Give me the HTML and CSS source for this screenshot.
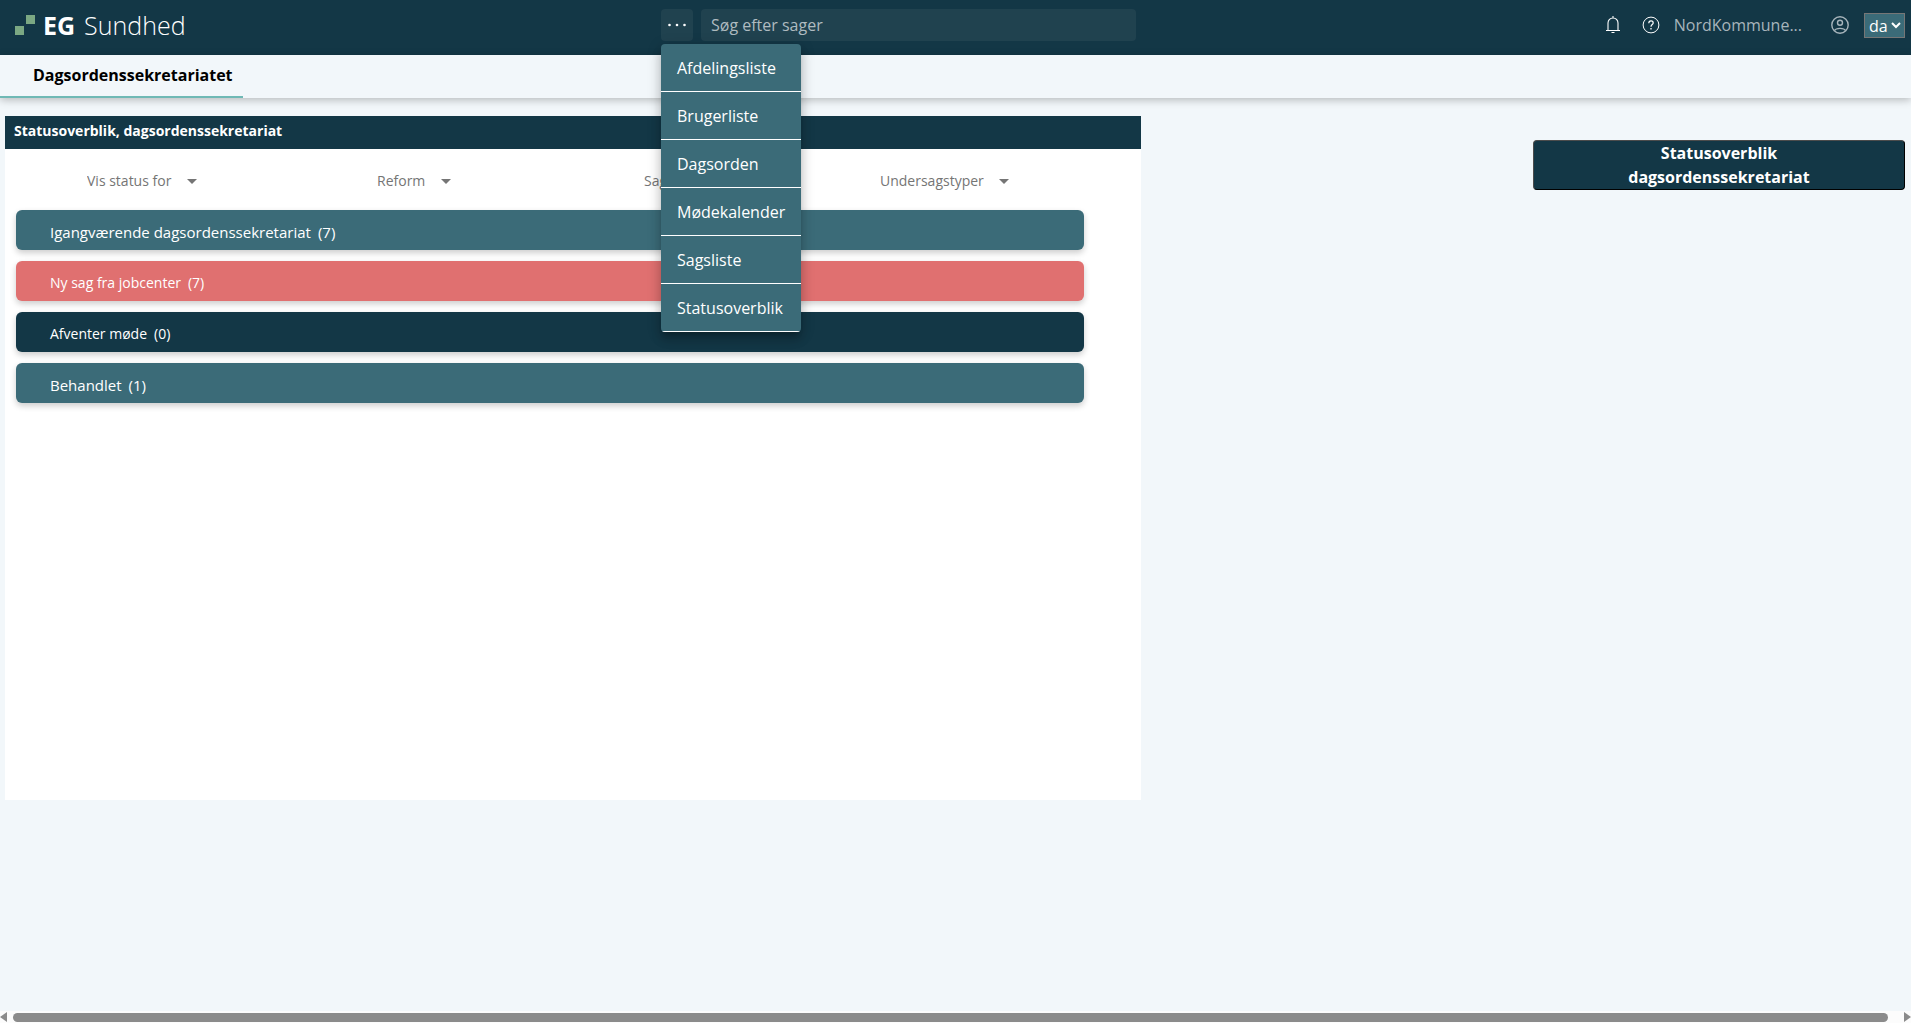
FILE: index.html
```html
<!DOCTYPE html>
<html lang="da">
<head>
<meta charset="utf-8">
<title>EG Sundhed</title>
<link rel="stylesheet" href="styles.css">
</head>
<body>
<header class="topbar">
  <a class="brand" href="#">
    <svg class="brand-mark" width="20" height="20" viewBox="0 0 20 20" aria-hidden="true"><path fill="#7ba883" d="M11 0h9v9h-9zM0 11h9v9H0z"/></svg>
    <strong class="brand-eg">EG</strong>
    <span class="brand-name">Sundhed</span>
  </a>
  <div class="search">
    <div class="menu-wrap">
      <button class="menu-button" type="button" aria-label="Menu">
        <svg width="20" height="4" viewBox="0 0 20 4" fill="#fff"><circle cx="2.500" cy="2" r="1.300"/><circle cx="10" cy="2" r="1.300"/><circle cx="17.500" cy="2" r="1.300"/></svg>
      </button>
      <nav class="menu">
        <a class="menu-item" href="#">Afdelingsliste</a>
        <a class="menu-item" href="#">Brugerliste</a>
        <a class="menu-item" href="#">Dagsorden</a>
        <a class="menu-item" href="#">Mødekalender</a>
        <a class="menu-item" href="#">Sagsliste</a>
        <a class="menu-item" href="#">Statusoverblik</a>
      </nav>
    </div>
    <input class="search-input" type="search" placeholder="Søg efter sager" aria-label="Søg efter sager">
  </div>
  <div class="tools">
    <button class="icon-button" type="button" aria-label="Notifikationer">
      <svg width="16" height="18" viewBox="0 0 16 18" fill="none" stroke="#fff" stroke-width="1.100"><path d="M8 0v2M1 14.500h14M3 14.500V7a5 5 0 0 1 10 0v7.500M6.500 16.500h3"/></svg>
    </button>
    <button class="icon-button help" type="button" aria-label="Hjælp">
      <svg width="18" height="18" viewBox="0 0 18 18" fill="none" stroke="#fff" stroke-width="1"><circle cx="9" cy="9" r="7.900"/><path stroke-width="1.200" d="M6.800 7.200C6.800 5.600 7.800 4.900 9 4.900s2.200.7 2.200 2c0 1.600-2.200 1.800-2.200 3.800"/><path stroke-width="1.300" d="M9 12v1.500"/></svg>
    </button>
    <span class="org">NordKommune...</span>
    <button class="icon-button" type="button" aria-label="Bruger">
      <svg width="18" height="18" viewBox="0 0 18 18" fill="none" stroke="#a7b4bb" stroke-width="1.400"><circle cx="9" cy="9" r="8.200"/><circle cx="9" cy="6.800" r="2.500"/><path d="M3.500 14.600c1.500-3 9.500-3 11 0"/></svg>
    </button>
    <select class="language" aria-label="Sprog"><option>da</option></select>
  </div>
</header>
<nav class="tabs"><a class="tab" href="#">Dagsordenssekretariatet</a></nav>
<main class="content">
  <section class="panel">
    <h1 class="panel-title">Statusoverblik, dagsordenssekretariat</h1>
    <div class="filters">
      <div class="filter"><select class="filter-select" aria-label="Vis status for"><option>Vis status for</option></select></div>
      <div class="filter"><select class="filter-select" aria-label="Reform"><option>Reform</option></select></div>
      <div class="filter"><select class="filter-select" aria-label="Sagstyper"><option>Sagstyper</option></select></div>
      <div class="filter"><select class="filter-select" aria-label="Undersagstyper"><option>Undersagstyper</option></select></div>
    </div>
    <div class="rows">
      <button class="row row-main" type="button"><span>Igangværende dagsordenssekretariat</span><span>(7)</span></button>
      <button class="row row-alert" type="button"><span>Ny sag fra jobcenter</span><span>(7)</span></button>
      <button class="row row-dark" type="button"><span>Afventer møde</span><span>(0)</span></button>
      <button class="row row-main" type="button"><span>Behandlet</span><span>(1)</span></button>
    </div>
  </section>
  <aside class="side">
    <button class="side-button" type="button">Statusoverblik<br>dagsordenssekretariat</button>
  </aside>
</main>
<div class="scrollbar" aria-hidden="true">
  <span class="arrow arrow-left"></span>
  <span class="thumb"></span>
  <span class="arrow arrow-right"></span>
</div>
</body>
</html>
```

FILE: styles.css
```css
* { box-sizing: border-box; }

body {
  margin: 0;
  min-height: 100vh;
  display: flex;
  flex-direction: column;
  background: #f2f7fa;
  font: 16px/24px "Open Sans", "Noto Sans", sans-serif;
}

button, input, select { font: inherit; }
button { cursor: pointer; }
a { color: inherit; text-decoration: none; }

/* Top bar */
.topbar {
  display: grid;
  grid-template-columns: 661fr 475fr 775fr;
  height: 55px;
  padding-bottom: 5px;
  align-items: center;
  background: #133746;
  color: #fff;
}

.brand {
  display: flex;
  align-items: center;
  padding-left: 15px;
  font-size: 25px;
  line-height: 32px;
}
.brand-eg { margin: 0 9px 0 8px; font-weight: 700; }
.brand-name { font-weight: 300; }

.search { display: flex; gap: 8px; }
.menu-wrap { position: relative; }
.menu-button {
  display: flex;
  align-items: center;
  justify-content: center;
  width: 32px;
  height: 32px;
  padding: 0;
  border: 0;
  border-radius: 4px;
  background: #20424f;
}
.search-input {
  flex: 1;
  min-width: 0;
  height: 32px;
  padding: 0 10px;
  border: 0;
  border-radius: 4px;
  background: #20424f;
  color: #fff;
}
.search-input::placeholder { color: #afbbc0; }

.menu {
  position: absolute;
  z-index: 10;
  top: 35px;
  left: 0;
  width: 140px;
  overflow: hidden;
  border-radius: 4px;
  background: #3b6b78;
  box-shadow: 0 5px 5px -3px rgba(0, 0, 0, .2), 0 8px 10px 1px rgba(0, 0, 0, .14), 0 3px 14px 2px rgba(0, 0, 0, .12);
}
.menu-item {
  display: block;
  height: 48px;
  padding: 0 16px;
  border-bottom: 1px solid #fff;
  line-height: 48px;
}

.tools {
  display: flex;
  align-items: center;
  justify-content: flex-end;
  padding-right: 6px;
}
.icon-button {
  display: flex;
  padding: 0;
  border: 0;
  background: none;
}
.help { margin: 0 14px 0 21px; }
.org { margin-right: 29px; color: #a7b4bb; }
.language {
  height: 25px;
  margin-left: 15px;
  padding: 0;
  border: 1px solid #767676;
  background: #3b6b78;
  color: #fff;
}

/* Tabs */
.tabs {
  display: flex;
  height: 43px;
  box-shadow: 0 2px 8px rgba(0, 0, 0, .25);
}
.tab {
  padding: 8px 10px 0 33px;
  border-bottom: 2px solid #6fb9b5;
  color: #000;
  font-weight: 700;
}

/* Content */
.content {
  flex: 1;
  display: grid;
  grid-template-columns: 1136fr 372fr;
  column-gap: 392px;
  align-items: start;
  padding: 18px 6px 0 5px;
}

.panel {
  min-height: 684px;
  background: #fff;
}
.panel-title {
  margin: 0;
  padding: 0 9px 3px;
  background: #133746;
  color: #fff;
  font-size: 14px;
  line-height: 30px;
  font-weight: 700;
}
.filters {
  display: grid;
  grid-template-columns: 290fr 267fr 236fr 261fr;
  padding: 20px 0 17px 82px;
}
.filter {
  display: flex;
  align-items: center;
  gap: 15px;
}
.filter::after {
  content: "";
  border: 5px solid transparent;
  border-top-color: #757575;
  border-bottom: 0;
}
.filter-select {
  appearance: none;
  padding: 0;
  border: 0;
  background: none;
  color: #757575;
  font-size: 14px;
  line-height: 24px;
}

.rows {
  display: grid;
  gap: 11px;
  padding: 0 57px 0 11px;
}
.row {
  display: flex;
  align-items: center;
  gap: 7px;
  height: 40px;
  padding: 3px 34px 0;
  border: 0;
  border-radius: 6px;
  color: #fff;
  font-size: 14px;
  box-shadow: 0 3px 6px rgba(0, 0, 0, .2);
}
.row-main {
  background: #3b6b78;
  font-size: 15px;
}
.row-alert { background: #e07070; }
.row-dark { background: #133746; }

.side { padding-top: 24px; }
.side-button {
  width: 100%;
  height: 50px;
  padding: 0;
  border: 1px solid #000;
  border-top-color: #4c4c4c;
  border-left-color: #4c4c4c;
  border-radius: 4px;
  background: #133746;
  color: #fff;
  font-weight: 700;
}

/* Horizontal scroll strip */
.scrollbar {
  display: flex;
  align-items: center;
  height: 12px;
  background: #fcfcfc;
}
.arrow {
  border: 5px solid transparent;
}
.arrow-left { border-left: 0; border-right: 7px solid #8b8b8b; }
.arrow-right { border-right: 0; border-left: 7px solid #8b8b8b; }
.thumb {
  flex: 1;
  height: 9px;
  margin: 1px 16px 0 6px;
  border-radius: 5px;
  background: #8b8b8b;
}
```
